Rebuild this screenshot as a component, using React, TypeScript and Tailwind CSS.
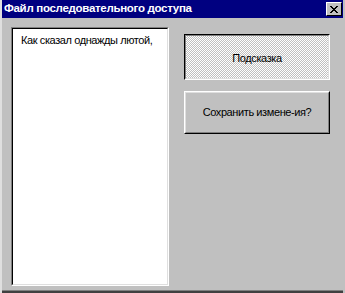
const font = "font-['Liberation_Sans',Arial,sans-serif]";

const CloseButton = () => (
  <div className="w-[16px] h-[14px] bg-[#c0c0c0] border border-t-white border-l-white border-r-black border-b-black flex items-center justify-center">
    <svg width="8" height="7" viewBox="0 0 8 7" shapeRendering="crispEdges">
      <path d="M0 0h2v1H0zM6 0h2v1H6zM1 1h2v1H1zM5 1h2v1H5zM2 2h4v1H2zM3 3h2v1H3zM2 4h4v1H2zM1 5h2v1H1zM5 5h2v1H5zM0 6h2v1H0zM6 6h2v1H6z" fill="#000" />
    </svg>
  </div>
);

export default function App() {
  return (
    <div className={`${font} w-[345px] h-[293px] bg-[#c0c0c0] flex flex-col border-l-2 border-l-[#dfdfdf] border-r-2 border-r-[#c0c0c0] overflow-hidden`}>
      <div className="h-[18px] bg-[#000080] flex items-center justify-between pl-[2px] pr-[1px] shrink-0">
        <span className="text-white text-[11.5px] font-bold leading-none tracking-[-0.3px]">Файл последовательного доступа</span>
        <CloseButton />
      </div>

      <div className="flex-1 flex pl-[9px] pt-[9px]">
        <div className="w-[158px] h-[259px] border border-t-[#808080] border-l-[#808080] border-r-white border-b-white">
          <div className="h-full bg-white border border-t-black border-l-black border-r-[#dfdfdf] border-b-[#dfdfdf] px-[8px] pt-[5px]">
            <p className="text-[11px] leading-[13px] text-black tracking-[-0.4px]">Как сказал однажды лютой,</p>
          </div>
        </div>

        <div className="ml-[15px] mt-[7px] w-[146px] flex flex-col gap-[11px]">
          <div className="h-[46px] border border-t-black border-l-black border-r-white border-b-white">
            <div className="h-full border border-t-[#808080] border-l-[#808080] border-r-[#dfdfdf] border-b-[#dfdfdf] bg-[repeating-conic-gradient(#c0c0c0_0_25%,#ffffff_0_50%)] bg-[length:2px_2px] flex items-center justify-center">
              <span className="text-[11px] text-black tracking-[-0.4px] mt-[3px]">Подсказка</span>
            </div>
          </div>
          <div className="h-[43px] border border-t-white border-l-white border-r-black border-b-black">
            <div className="h-full border border-t-[#dfdfdf] border-l-[#dfdfdf] border-r-[#808080] border-b-[#808080] flex items-center justify-center">
              <span className="text-[11px] text-black tracking-[-0.4px]">Сохранить измене-ия?</span>
            </div>
          </div>
        </div>
      </div>

      <div className="h-[3px] bg-[#404040] border-t border-t-[#808080] shrink-0" />
    </div>
  );
}
